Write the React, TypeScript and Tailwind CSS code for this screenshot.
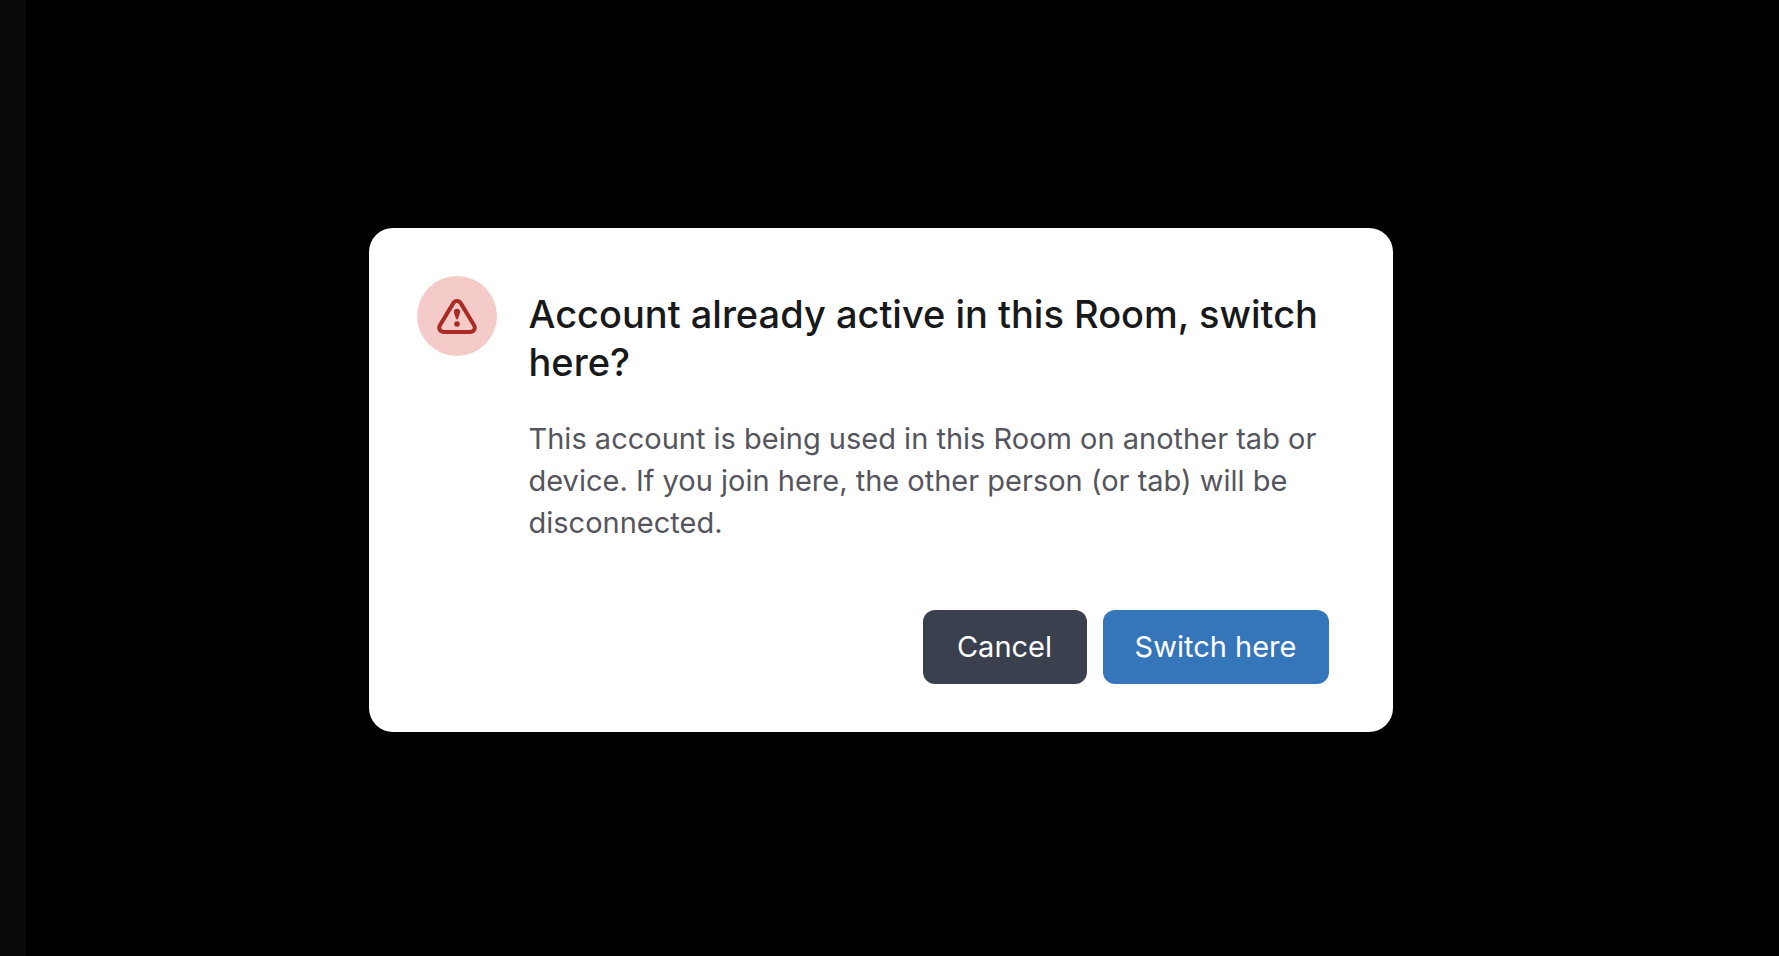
const WarningIcon = () => {
  return (
    <svg className="h-12 w-12" viewBox="0 0 48 48" fill="none" aria-hidden="true">
      <path
        d="M20 11.6 C21.8 8.2 26.2 8.2 28 11.6 L40.9 33 C43 36.6 41 40 37 40 H11 C7 40 5 36.6 7.1 33 Z"
        stroke="#a92b24"
        strokeWidth="4"
        strokeLinejoin="round"
      />
      <path
        d="M24 16.8 C26.1 16.8 27.4 18.3 27.1 20.3 C26.8 22.4 25.6 24.3 24.9 27.2 H23.1 C22.4 24.3 21.2 22.4 20.9 20.3 C20.6 18.3 21.9 16.8 24 16.8 Z"
        fill="#a92b24"
      />
      <circle cx="24" cy="32" r="2.8" fill="#a92b24" />
    </svg>
  );
};

const App = () => {
  return (
    <div className="flex min-h-screen bg-black font-['Inter',sans-serif]">
      {/* Page edge behind the overlay */}
      <aside className="w-[26px] shrink-0 bg-[#090909]" />

      <main className="flex flex-1 items-center justify-center pt-1 pr-11">
        <div
          role="alertdialog"
          aria-labelledby="dialog-title"
          aria-describedby="dialog-text"
          className="w-full max-w-5xl rounded-3xl bg-white p-12"
        >
          <div className="flex items-start gap-8">
            <div className="flex h-20 w-20 shrink-0 items-center justify-center rounded-full bg-[#f5cbca]">
              <WarningIcon />
            </div>
            <div className="flex-1 pt-3.5 pb-0.5">
              <h1 id="dialog-title" className="text-[38px] leading-[48px] font-medium text-[#18191b]">
                Account already active in this Room, switch
                <br />
                here?
              </h1>
              <p id="dialog-text" className="mt-8 text-[29px] leading-[42px] text-[#55555e]">
                This account is being used in this Room on another tab or
                <br />
                device. If you join here, the other person (or tab) will be
                <br />
                disconnected.
              </p>
            </div>
          </div>

          {/* Actions */}
          <div className="mt-16 flex justify-end gap-4 pr-4 text-[29px] leading-[42px] text-white">
            <button type="button" className="min-w-[164px] rounded-xl bg-[#3b404f] px-7 py-4">
              Cancel
            </button>
            <button type="button" className="min-w-[226px] rounded-xl bg-[#3575b9] px-7 py-4">
              Switch here
            </button>
          </div>
        </div>
      </main>
    </div>
  );
};

export default App;
